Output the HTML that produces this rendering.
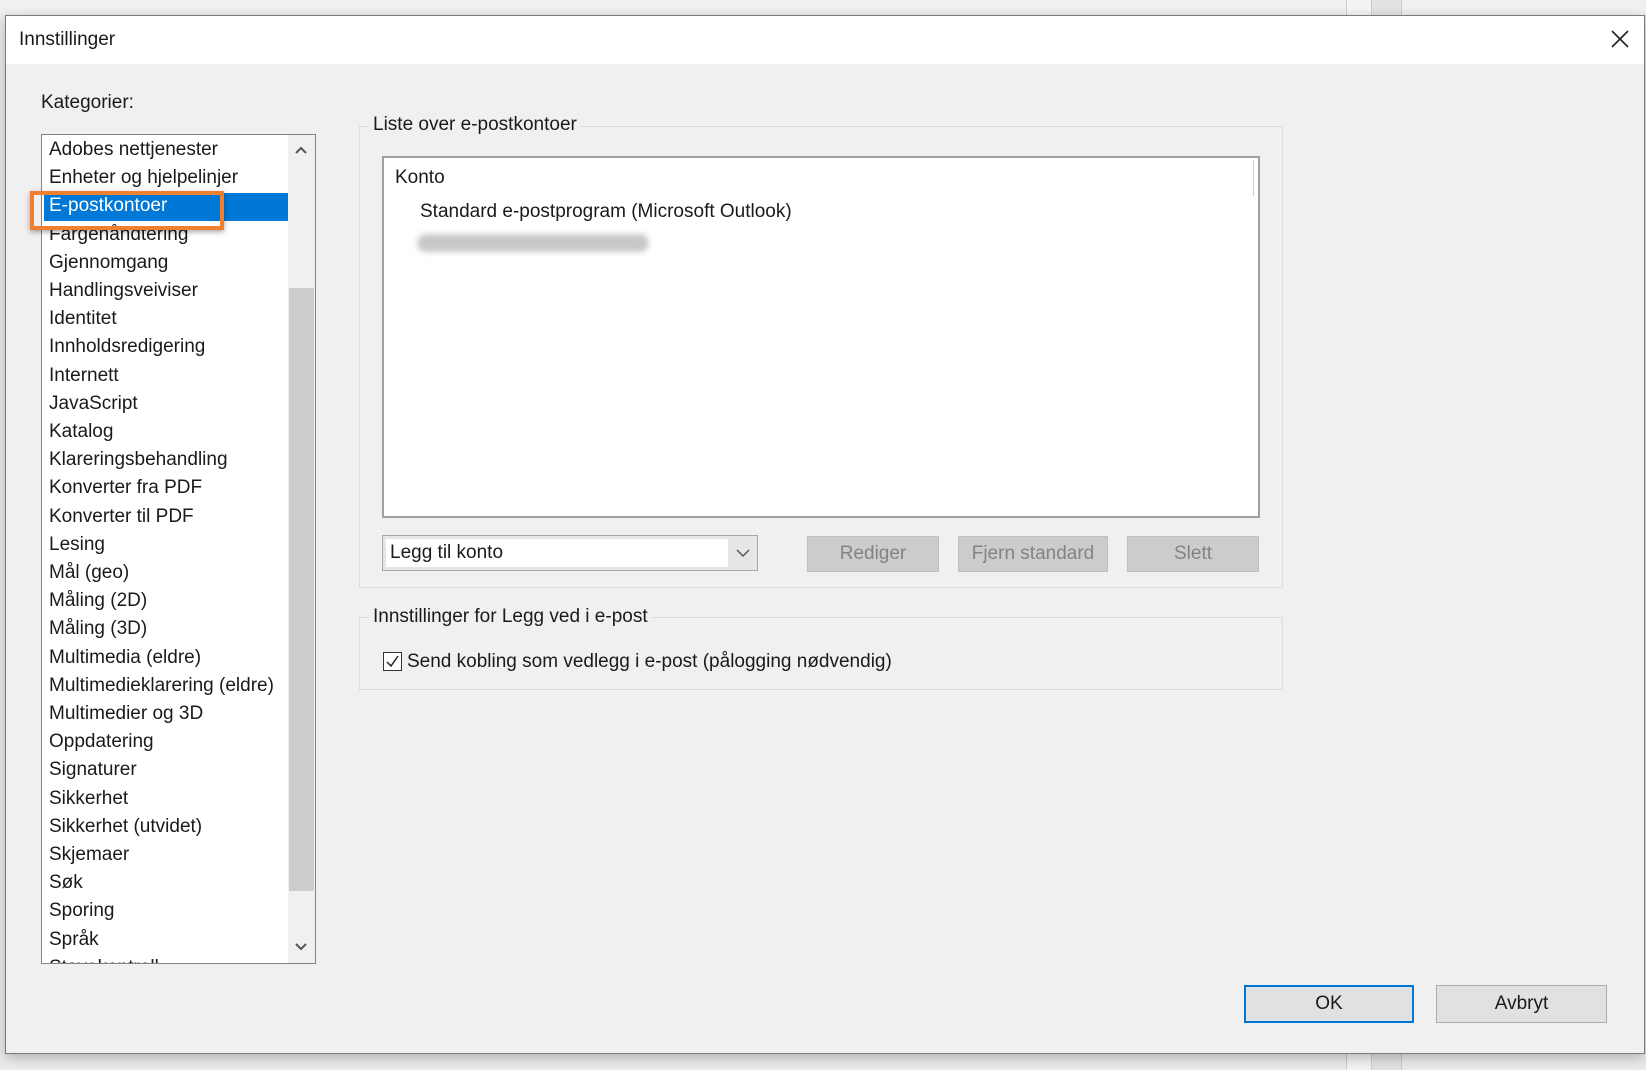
<!DOCTYPE html>
<html><head><meta charset="utf-8"><style>
*{margin:0;padding:0;box-sizing:border-box}
html,body{width:1646px;height:1070px;overflow:hidden;background:#ececec;font-family:"Liberation Sans",sans-serif;color:#1a1a1a}
.a{position:absolute}
.t{position:absolute;font-size:19px;line-height:22px;white-space:nowrap}
</style></head><body>
<div class="a" style="left:0;top:0;width:1646px;height:16px;background:#f0f0f0"></div>
<div class="a" style="left:1346px;top:0;width:26px;height:16px;border-left:1px solid #ccc;border-right:1px solid #ccc;background:#f4f4f4"></div>
<div class="a" style="left:1372px;top:0;width:30px;height:16px;background:#e3e3e3;border-right:1px solid #ccc"></div>
<div class="a" style="left:1346px;top:1054px;width:26px;height:16px;border-left:1px solid #ccc;border-right:1px solid #ccc;background:#f4f4f4"></div>
<div class="a" style="left:1372px;top:1054px;width:30px;height:16px;background:#e3e3e3;border-right:1px solid #ccc"></div>
<div class="a" style="left:5px;top:15px;width:1640px;height:1039px;background:#f0f0f0;border:1px solid #7a7a7a;box-shadow:0 4px 12px rgba(0,0,0,.25)"></div>
<div class="a" style="left:6px;top:16px;width:1638px;height:48px;background:#fff"></div>
<div class="t" style="left:19px;top:29px">Innstillinger</div>
<svg class="a" style="left:1611px;top:30px" width="18" height="18" viewBox="0 0 18 18"><path d="M1 1L17 17M17 1L1 17" stroke="#222" stroke-width="1.6"/></svg>

<div class="t" style="left:41px;top:92px">Kategorier:</div>
<div class="a" style="left:41px;top:134px;width:275px;height:830px;background:#fff;border:1px solid #828282;overflow:hidden">
 <div class="a" style="left:246px;top:0;width:27px;height:828px;background:#f0f0f0"></div>
 <div class="a" style="left:247px;top:153px;width:25px;height:603px;background:#cdcdcd"></div>
 <svg class="a" style="left:252px;top:10px" width="14" height="10"><path d="M2 8L7 3L12 8" stroke="#555" stroke-width="2" fill="none"/></svg>
 <svg class="a" style="left:252px;top:807px" width="14" height="10"><path d="M2 2L7 7L12 2" stroke="#555" stroke-width="2" fill="none"/></svg>
 <div class="a" style="left:2px;top:58px;width:244px;height:28px;background:#0078d7"></div>
 <div style="position:absolute;left:7px;top:1px;font-size:19px;line-height:28.2px">
  <div>Adobes nettjenester</div><div>Enheter og hjelpelinjer</div><div style="color:#fff">E-postkontoer</div><div>Fargehåndtering</div><div>Gjennomgang</div><div>Handlingsveiviser</div><div>Identitet</div><div>Innholdsredigering</div><div>Internett</div><div>JavaScript</div><div>Katalog</div><div>Klareringsbehandling</div><div>Konverter fra PDF</div><div>Konverter til PDF</div><div>Lesing</div><div>Mål (geo)</div><div>Måling (2D)</div><div>Måling (3D)</div><div>Multimedia (eldre)</div><div>Multimedieklarering (eldre)</div><div>Multimedier og 3D</div><div>Oppdatering</div><div>Signaturer</div><div>Sikkerhet</div><div>Sikkerhet (utvidet)</div><div>Skjemaer</div><div>Søk</div><div>Sporing</div><div>Språk</div><div>Stavekontroll</div>
 </div>
</div>
<div class="a" style="left:30px;top:191px;width:194px;height:39px;border:4px solid #f07f2e;box-shadow:0 2px 5px rgba(0,0,0,.35)"></div>

<div class="a" style="left:359px;top:126px;width:924px;height:462px;border:1px solid #dcdcdc"></div>
<div class="t" style="left:369px;top:114px;background:#f0f0f0;padding:0 4px">Liste over e-postkontoer</div>
<div class="a" style="left:382px;top:156px;width:878px;height:362px;background:#fff;border:2px solid #a0a0a0"></div>
<div class="a" style="left:1253px;top:160px;width:1px;height:36px;background:#ccc"></div>
<div class="t" style="left:395px;top:167px">Konto</div>
<div class="t" style="left:420px;top:201px">Standard e-postprogram (Microsoft Outlook)</div>
<div class="a" style="left:417px;top:234px;width:232px;height:18px;border-radius:9px;background:#c8c8c8;filter:blur(3px)"></div>
<div class="a" style="left:382px;top:535px;width:376px;height:36px;background:#e6e6e6;border:1px solid #a8a8a8"></div>
<div class="a" style="left:386px;top:539px;width:342px;height:28px;background:#fff"></div>
<div class="t" style="left:390px;top:542px">Legg til konto</div>
<svg class="a" style="left:736px;top:548px" width="14" height="10"><path d="M1 2L7 8L13 2" stroke="#555" stroke-width="1.5" fill="none"/></svg>
<div class="a" style="left:807px;top:536px;width:132px;height:36px;background:#cccccc;border:1px solid #bfbfbf"></div>
<div class="t" style="left:807px;top:543px;width:132px;text-align:center;color:#838383">Rediger</div>
<div class="a" style="left:958px;top:536px;width:150px;height:36px;background:#cccccc;border:1px solid #bfbfbf"></div>
<div class="t" style="left:958px;top:543px;width:150px;text-align:center;color:#838383">Fjern standard</div>
<div class="a" style="left:1127px;top:536px;width:132px;height:36px;background:#cccccc;border:1px solid #bfbfbf"></div>
<div class="t" style="left:1127px;top:543px;width:132px;text-align:center;color:#838383">Slett</div>

<div class="a" style="left:359px;top:617px;width:924px;height:73px;border:1px solid #dcdcdc"></div>
<div class="t" style="left:369px;top:606px;background:#f0f0f0;padding:0 4px">Innstillinger for Legg ved i e-post</div>
<div class="a" style="left:383px;top:652px;width:19px;height:19px;border:1px solid #333;background:#fff"></div>
<svg class="a" style="left:385px;top:654px" width="15" height="15"><path d="M2 8L6 12L13 2" stroke="#222" stroke-width="1.5" fill="none"/></svg>
<div class="t" style="left:407px;top:651px">Send kobling som vedlegg i e-post (pålogging nødvendig)</div>

<div class="a" style="left:1244px;top:985px;width:170px;height:38px;background:#e1e1e1;border:2px solid #0078d7"></div>
<div class="t" style="left:1244px;top:993px;width:170px;text-align:center">OK</div>
<div class="a" style="left:1436px;top:985px;width:171px;height:38px;background:#e1e1e1;border:1px solid #adadad"></div>
<div class="t" style="left:1436px;top:993px;width:171px;text-align:center">Avbryt</div>
</body></html>
